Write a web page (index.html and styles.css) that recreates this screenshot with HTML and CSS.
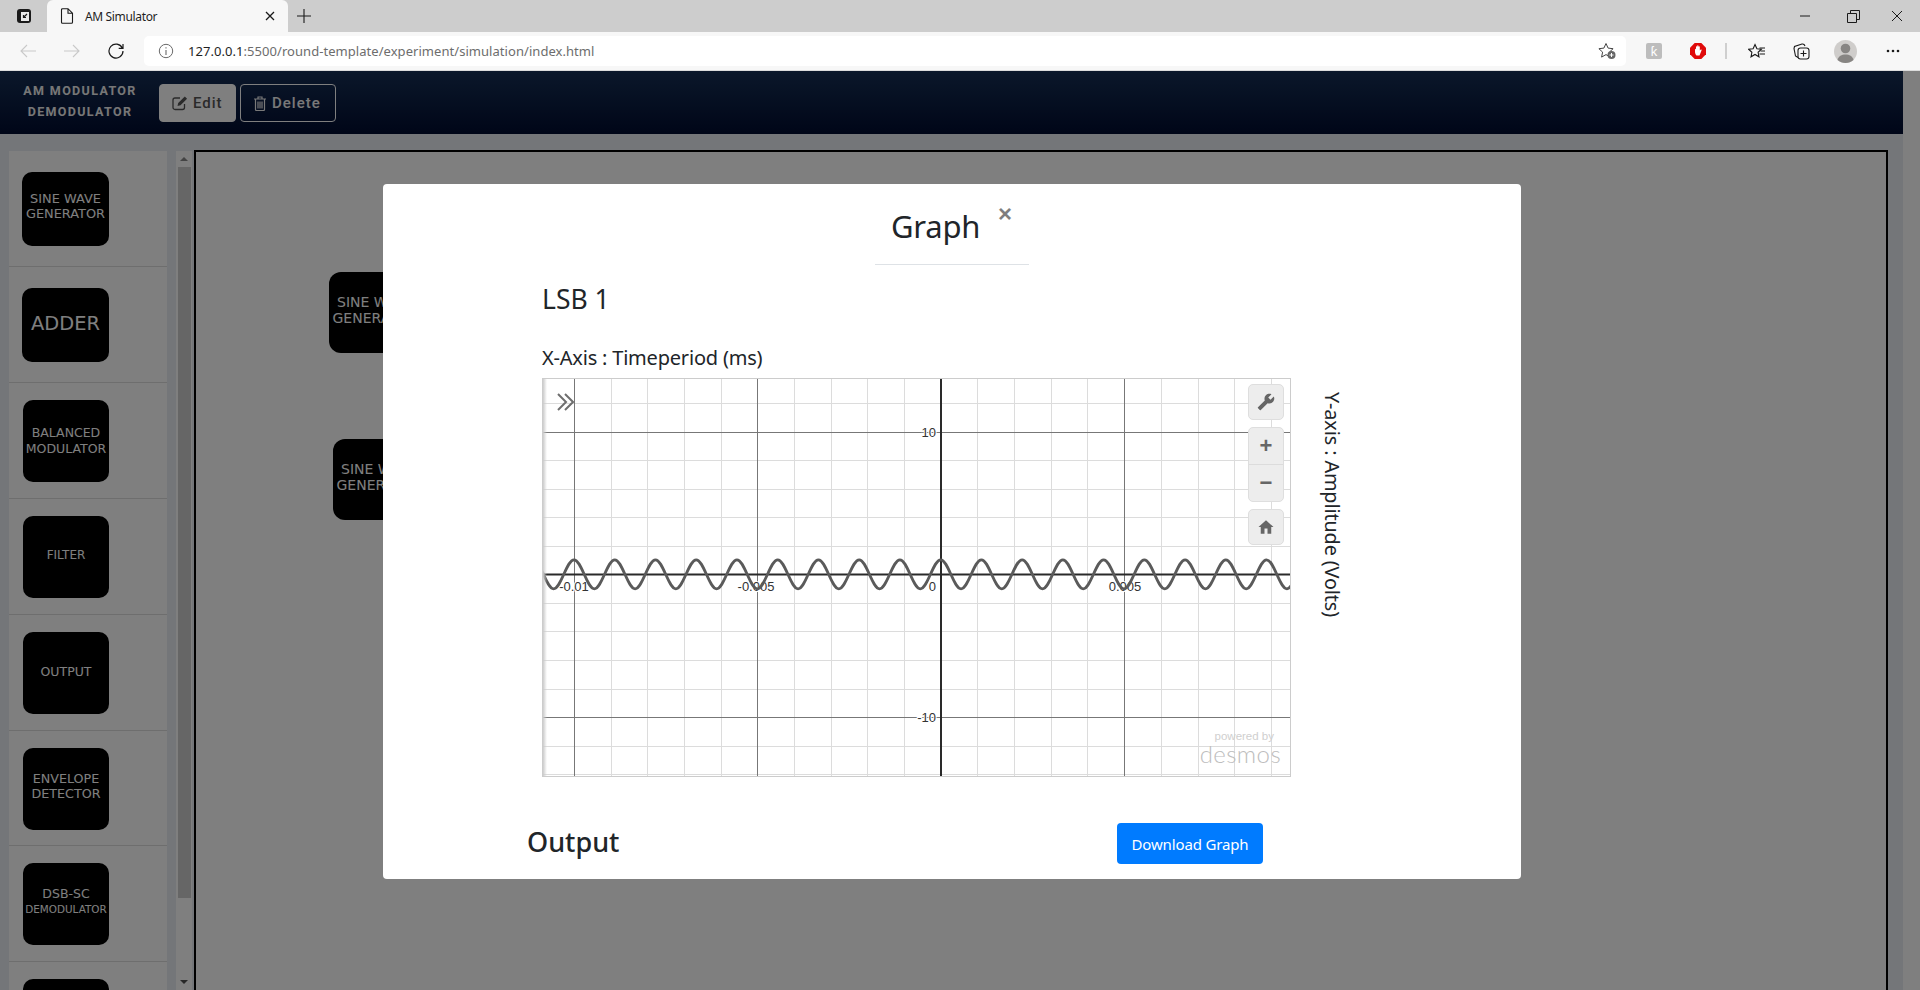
FILE: index.html
```html
<!DOCTYPE html>
<html lang="en">
<head>
<meta charset="utf-8">
<title>AM Simulator</title>
<link rel="stylesheet" href="styles.css">
</head>
<body>
<header class="browser">
  <div class="tabstrip">
    <svg class="tab-actions" viewBox="0 0 16 16" width="16" height="16"><rect x="1" y="1" width="14" height="14" rx="3" fill="#1a1a1a"/><rect x="5" y="4" width="8" height="9" fill="#e8e8e8"/><path d="M11 6L7.5 9.5M7.5 7v2.5H10" fill="none" stroke="#1a1a1a" stroke-width="1.2"/></svg>
    <div class="tab">
      <svg class="tab-doc" viewBox="0 0 14 16" width="14" height="16"><path d="M2.5.7h5.5l4.5 4.5v9a1 1 0 0 1-1 1h-9a1 1 0 0 1-1-1v-12.500a1 1 0 0 1 1-1zM8 .7v4.500h4.500" fill="none" stroke="#1a1a1a" stroke-width="1.1"/></svg>
      <span class="tab-title">AM Simulator</span>
      <svg class="tab-close" viewBox="0 0 10 10" width="10" height="10"><path d="M1 1l8 8M9 1l-8 8" stroke="#1a1a1a" stroke-width="1.3"/></svg>
    </div>
    <svg class="new-tab" viewBox="0 0 14 14" width="14" height="14"><path d="M7 0v14M0 7h14" stroke="#1a1a1a" stroke-width="1.1"/></svg>
    <div class="win-controls">
      <svg viewBox="0 0 10 10" width="10" height="10"><path d="M0 5h10" stroke="#1a1a1a"/></svg>
      <svg viewBox="0 0 13 13" width="13" height="13"><path d="M.5 3.500h9v9h-9zM3.500 3.500v-3h9v9h-3" fill="none" stroke="#1a1a1a"/></svg>
      <svg viewBox="0 0 10 10" width="10" height="10"><path d="M0 0l10 10M10 0L0 10" stroke="#1a1a1a"/></svg>
    </div>
  </div>
  <div class="toolbar">
    <svg class="nav-icon" viewBox="0 0 16 14" width="16" height="14"><path d="M16 7H1M7 1L1 7l6 6" fill="none" stroke="#c9c9c9" stroke-width="1.100"/></svg>
    <svg class="nav-icon" viewBox="0 0 16 14" width="16" height="14"><path d="M0 7h15M9 1l6 6-6 6" fill="none" stroke="#c9c9c9" stroke-width="1.100"/></svg>
    <svg class="nav-icon" viewBox="0 0 16 16" width="16" height="16"><path d="M14.300 5A7 7 0 1 0 15 8M15 1v4.300h-4.300" fill="none" stroke="#1a1a1a" stroke-width="1.200"/></svg>
    <div class="address">
      <svg class="info" viewBox="0 0 16 16" width="16" height="16"><circle cx="8" cy="8" r="6.700" fill="none" stroke="#6a6a6a"/><path d="M8 7v5M8 4.200v1.400" stroke="#6a6a6a" stroke-width="1.100"/></svg>
      <span class="url"><b class="url-host">127.0.0.1</b>:5500/round-template/experiment/simulation/index.html</span>
      <svg class="addr-star" viewBox="0 0 18 18" width="18" height="18"><path d="M8 1.500l2.100 4.600 5 .6-3.700 3.400 1 5L8 12.600l-4.400 2.500 1-5L.9 6.700l5-.6z" fill="none" stroke="#444"/><circle cx="13.500" cy="13" r="4" fill="#666"/><path d="M13.500 11v4M11.500 13h4" stroke="#fff"/></svg>
    </div>
    <div class="ext-icons">
      <span class="ext-k">ƙ</span>
      <svg viewBox="0 0 16 16" width="16" height="16"><path d="M4.700 0h6.600L16 4.700v6.600L11.300 16H4.700L0 11.300V4.700z" fill="#e00b0b"/><path d="M5 6.500c0-1 1-1 1 0V4c0-1 1.200-1 1.200 0V3c0-1 1.300-1 1.300 0v1c0-1 1.300-1 1.300 0v3.500l.7-.7c.7-.6 1.400 0 1 .7L9.500 12.500H6.500C5.500 11.500 5 10 5 9z" fill="#fff"/></svg>
      <i class="ext-sep"></i>
      <svg viewBox="0 0 18 16" width="18" height="16"><path d="M7 1.500l1.900 4.200 4.500.5-3.300 3.100.9 4.500L7 11.500l-4 2.300.9-4.500L.6 6.200l4.500-.5z" fill="none" stroke="#1a1a1a" stroke-width="1.100"/><path d="M11.500 5H17M12.500 8H17M11.500 11H17" stroke="#1a1a1a" stroke-width="1.100"/></svg>
      <svg viewBox="0 0 17 17" width="17" height="17"><path d="M5 14.500L2.500 13 1 5.500 1.500 3.500 9 1c1.500-.3 2.500.5 3 2" fill="none" stroke="#1a1a1a" stroke-width="1.100"/><rect x="5" y="5" width="11" height="11" rx="2.500" fill="#f7f7f7" stroke="#1a1a1a" stroke-width="1.100"/><path d="M10.500 7.500v6M7.500 10.500h6" stroke="#1a1a1a" stroke-width="1.100"/></svg>
      <svg class="avatar" viewBox="0 0 23 23" width="23" height="23"><circle cx="11.500" cy="11.500" r="11.500" fill="#cfcdcb"/><circle cx="11.500" cy="8.500" r="4.800" fill="#878583"/><path d="M3.500 20c1-4 4-5.500 8-5.500s7 1.500 8 5.500c-4.500 4-11.500 4-16 0z" fill="#878583"/></svg>
      <svg viewBox="0 0 14 4" width="14" height="4"><circle cx="2" cy="2" r="1.300" fill="#1a1a1a"/><circle cx="7" cy="2" r="1.300" fill="#1a1a1a"/><circle cx="12" cy="2" r="1.300" fill="#1a1a1a"/></svg>
    </div>
  </div>
</header>

<div class="viewport">
  <div class="page">
    <nav class="topnav">
      <div class="brand">AM MODULATOR<br>DEMODULATOR</div>
      <button class="btn-edit">
        <svg viewBox="0 0 16 16" width="16" height="16"><path d="M12.500 9v3.500a2 2 0 0 1-2 2H3a2 2 0 0 1-2-2V5a2 2 0 0 1 2-2h5" fill="none" stroke="currentColor" stroke-width="1.300"/><path d="M5.500 11l.7-3L12.800 1.400l2.300 2.300-6.600 6.600z" fill="currentColor"/></svg>
        Edit
      </button>
      <button class="btn-delete">
        <svg viewBox="0 0 14 16" width="14" height="16"><path d="M1 4h12M5 4V2h4v2M2.500 4v10.500a1 1 0 0 0 1 1h7a1 1 0 0 0 1-1V4M5 6.500v7M7 6.500v7M9 6.500v7" fill="none" stroke="currentColor" stroke-width="1.200"/></svg>
        Delete
      </button>
    </nav>
    <div class="workspace">
      <aside class="palette">
        <ul class="palette-list">
          <li class="item item-loose"><div class="block sine">SINE WAVE<br>GENERATOR</div></li>
          <li class="item item-loose"><div class="block adder">ADDER</div></li>
          <li class="item"><div class="block tall wide-lines">BALANCED<br>MODULATOR</div></li>
          <li class="item"><div class="block tall filter">FILTER</div></li>
          <li class="item"><div class="block tall out">OUTPUT</div></li>
          <li class="item item-short"><div class="block tall env">ENVELOPE<br>DETECTOR</div></li>
          <li class="item"><div class="block tall dsb"><span>DSB-SC<br><small>DEMODULATOR</small></span></div></li>
          <li class="item"><div class="block tall"></div></li>
        </ul>
        <div class="side-scroll">
          <span class="arrow-up"></span>
          <span class="side-thumb"></span>
          <span class="side-spacer"></span>
          <span class="arrow-down"></span>
        </div>
      </aside>
      <main class="canvas">
        <div class="node node-a">SINE WAVE<br>GENERATOR</div>
        <div class="node node-b">SINE WAVE<br>GENERATOR</div>
      </main>
    </div>
  </div>
  <div class="page-scroll"></div>

  <div class="overlay">
    <section class="modal">
      <div class="modal-header">
        <h2 class="modal-title">Graph</h2>
        <span class="close">×</span>
      </div>
      <div class="graph-section">
        <h3 class="graph-name">LSB 1</h3>
        <div class="x-label">X-Axis : Timeperiod (ms)</div>
        <div class="graph-row">
          <div class="graph">
            <svg class="plot" viewBox="0 0 747 397" width="747" height="397">
              <path class="grid-minor" d="M68.500 0V397M104.500 0V397M141.500 0V397M178.500 0V397M251.500 0V397M288.500 0V397M324.500 0V397M361.500 0V397M434.500 0V397M471.500 0V397M508.500 0V397M544.500 0V397M618.500 0V397M655.500 0V397M691.500 0V397M728.500 0V397M0 24.500H747M0 81.500H747M0 110.500H747M0 138.500H747M0 167.500H747M0 224.500H747M0 252.500H747M0 281.500H747M0 310.500H747M0 367.500H747M0 395.500H747"/>
              <path class="grid-major" d="M31.500 0V397M214.500 0V397M581.500 0V397M0 53.500H747M0 338.500H747"/>
              <path class="axis" d="M398 0V397M0 195.500H747"/>
              <text class="tick" x="393" y="58" text-anchor="end">10</text>
              <text class="tick" x="393" y="343" text-anchor="end">-10</text>
              <text class="tick" x="393" y="212" text-anchor="end">0</text>
              <text class="tick" x="31" y="212" text-anchor="middle">-0.01</text>
              <text class="tick" x="213" y="212" text-anchor="middle">-0.005</text>
              <text class="tick" x="582" y="212" text-anchor="middle">0.005</text>
              <path class="curve" d="M-9.740 180.800c7.420 0 12.950 29 20.370 29s12.950-29 20.370-29s12.950 29 20.370 29s12.950-29 20.370-29s12.950 29 20.370 29s12.950-29 20.370-29s12.950 29 20.370 29s12.950-29 20.370-29s12.950 29 20.370 29s12.950-29 20.370-29s12.950 29 20.370 29s12.950-29 20.370-29s12.950 29 20.370 29s12.950-29 20.370-29s12.950 29 20.370 29s12.950-29 20.370-29s12.950 29 20.370 29s12.950-29 20.370-29s12.950 29 20.370 29s12.950-29 20.370-29s12.950 29 20.370 29s12.950-29 20.370-29s12.950 29 20.370 29s12.950-29 20.370-29s12.950 29 20.370 29s12.950-29 20.370-29s12.950 29 20.370 29s12.950-29 20.370-29s12.950 29 20.370 29s12.950-29 20.370-29s12.950 29 20.370 29s12.950-29 20.370-29s12.950 29 20.370 29s12.950-29 20.370-29s12.950 29 20.370 29s12.950-29 20.370-29s12.950 29 20.370 29s12.950-29 20.370-29"/>
            </svg>
            <svg class="chevrons" viewBox="0 0 17 18" width="17" height="18"><path d="M1 1l8 8-8 8M8 1l8 8-8 8" fill="none" stroke="#6e6e6e" stroke-width="2"/></svg>
            <div class="controls">
              <div class="ctl-group"><button class="ctl"><svg viewBox="0 0 24 24" width="18" height="18"><path transform="matrix(-1 0 0 1 24 0)" d="M22.700 19l-9.100-9.100c.9-2.300.4-5-1.500-6.900-2-2-5-2.400-7.400-1.300L9 6 6 9 1.600 4.700C.4 7.100.9 10.100 2.900 12.100c1.900 1.900 4.600 2.400 6.900 1.500l9.100 9.100c.4.4 1 .4 1.400 0l2.300-2.300c.5-.4.5-1.100.1-1.400z" fill="#666"/></svg></button></div>
              <div class="ctl-group"><button class="ctl ctl-sym">+</button><button class="ctl ctl-sym ctl-lower">−</button></div>
              <div class="ctl-group"><button class="ctl"><svg viewBox="0 0 24 24" width="18" height="18"><path d="M10 21v-7h4v7h5v-9h3L12 3 2 12h3v9z" fill="#666"/></svg></button></div>
            </div>
            <div class="powered">
              <span class="powered-by">powered by</span>
              <span class="desmos">desmos</span>
            </div>
          </div>
          <div class="y-label">Y-axis : Amplitude (Volts)</div>
        </div>
      </div>
      <div class="output-row">
        <h3 class="output-title">Output</h3>
        <button class="btn-download">Download Graph</button>
      </div>
    </section>
  </div>
</div>
</body>
</html>
```

FILE: styles.css
```css
* { box-sizing: border-box; }
html, body { margin: 0; height: 990px; overflow: hidden; }
body { font-family: "Noto Sans", "Open Sans", sans-serif; color: #212529; background: #fff; }
h2, h3, ul { margin: 0; padding: 0; }
button { font-family: inherit; cursor: pointer; }

/* browser chrome */
.browser { height: 71px; }
.tabstrip { height: 32px; background: #cdcdcd; display: flex; align-items: center; padding-left: 16px; position: relative; }
.tab-actions { margin-right: 15px; }
.tab { width: 241px; height: 32px; background: #f7f7f7; border-radius: 6px 6px 0 0; display: flex; align-items: center; padding: 0 13px; }
.tab-doc { margin-right: 11px; margin-left: 0; }
.tab-title { font-size: 12px; letter-spacing: -.35px; color: #1f1f1f; flex: 1; white-space: nowrap; }
.new-tab { margin-left: 9px; }
.win-controls { margin-left: auto; display: flex; align-items: center; gap: 37px; padding-right: 18px; }
.win-controls svg:last-child { margin-left: -5px; }
.toolbar { height: 39px; background: #f7f7f7; border-bottom: 1px solid #dcdcdc; display: flex; align-items: center; padding-left: 20px; }
.nav-icon { margin-right: 28px; }
.nav-icon + .nav-icon + .nav-icon { margin-right: 20px; }
.address { width: 1482px; height: 30px; background: #fff; border-radius: 5px; display: flex; align-items: center; padding-left: 14px; margin-top: -1px; }
.info { margin-right: 14px; }
.url { font-size: 13px; letter-spacing: .05px; color: #6d6d6d; white-space: nowrap; flex: 1; }
.url-host { font-weight: 400; color: #1f1f1f; }
.addr-star { margin-right: 10px; }
.ext-icons { display: flex; align-items: center; flex: 1; padding-left: 20px; }
.ext-icons svg:nth-of-type(1) { margin-left: 28px; }
.ext-icons svg:nth-of-type(2) { margin-left: 21px; }
.ext-icons svg:nth-of-type(3) { margin-left: 27px; }
.ext-icons svg:nth-of-type(4) { margin-left: 24px; }
.ext-icons svg:nth-of-type(5) { margin-left: 29px; }
.ext-k { width: 16px; height: 16px; background: #bdbdbd; border-radius: 2px; color: #fff; font-size: 13px; line-height: 16px; text-align: center; }
.ext-sep { width: 2px; height: 16px; background: #cfcfcf; margin-left: 19px; }

/* page */
.viewport { height: 919px; position: relative; display: flex; overflow: hidden; }
.page { flex: 1; min-width: 0; background: #e8ecf2; }
.page-scroll { width: 17px; background: #fff; }
.topnav { height: 63px; background: linear-gradient(#162f55, #000c30); display: flex; align-items: center; padding: 0 0 0 23px; }
.brand { width: 114px; margin: -4px 22px 0 0; text-align: center; color: #efefef; font-family: Roboto, sans-serif; font-weight: 700; font-size: 12.500px; letter-spacing: 1.350px; line-height: 21px; white-space: nowrap; }
.btn-edit, .btn-delete { height: 38px; border-radius: 4px; font-family: Roboto, sans-serif; font-weight: 500; font-size: 15px; letter-spacing: 1px; display: flex; align-items: center; gap: 5px; padding: 0 12px; }
.btn-edit { width: 77px; background: #fff; border: 1px solid #fff; color: #555; margin-right: 4px; }
.btn-delete { width: 96px; background: transparent; border: 1px solid #fff; color: #f2f2f2; }
.workspace { display: flex; padding: 16px 15px 0 9px; }
.palette { display: flex; width: 184px; height: 839px; margin-top: 1px; flex: none; }
.palette-list { width: 158px; list-style: none; background: #fff; overflow: hidden; height: 839px; }
.item { height: 116px; border-bottom: 1px solid #ddd; padding: 17px 0 0 14px; }
.item-loose { padding-top: 21px; padding-left: 13px; }
.item-short { height: 115px; }
.block { width: 87px; height: 74px; background: #000; border-radius: 10px; color: #fff; display: flex; align-items: center; justify-content: center; text-align: center; font-family: "DejaVu Sans", sans-serif; font-size: 12.500px; line-height: 1.150; padding-bottom: 5px; white-space: nowrap; }
.tall { height: 82px; width: 86px; }
.sine { font-size: 12.900px; line-height: 14.300px; }
.adder { font-size: 19.400px; padding-bottom: 2px; }
.wide-lines { line-height: 16.300px; padding: 0; }
.filter { font-size: 12px; padding-bottom: 3px; }
.out { padding-bottom: 2px; }
.env { line-height: 14.500px; font-size: 12.700px; }
.dsb { line-height: 15px; }
.dsb small { font-size: 10.400px; }
.side-scroll { margin-left: 9px; width: 16px; background: #fff; display: flex; flex-direction: column; align-items: center; }
.arrow-up, .arrow-down { height: 16px; width: 16px; flex: none; position: relative; }
.arrow-up::after, .arrow-down::after { content: ""; position: absolute; left: 4px; width: 0; height: 0; border-left: 4px solid transparent; border-right: 4px solid transparent; }
.arrow-up::after { top: 6px; border-bottom: 4px solid #888; }
.arrow-down::after { top: 6px; border-top: 4px solid #505050; }
.side-thumb { width: 13px; height: 731px; background: #cdcdcd; flex: none; }
.side-spacer { flex: 1; }
.canvas { flex: 1; height: 900px; margin-left: 1px; border: 2px solid #000; background: #fff; position: relative; }
.node { position: absolute; width: 93px; height: 81px; background: #000; color: #fff; border-radius: 12px; font-family: "DejaVu Sans", sans-serif; font-size: 14px; line-height: 16px; display: flex; align-items: center; justify-content: center; text-align: center; padding-bottom: 5px; white-space: nowrap; }
.node-a { left: 133px; top: 120px; }
.node-b { left: 137px; top: 287px; }

/* dimming overlay and modal */
.overlay { position: absolute; inset: 0; background: rgba(0, 0, 0, .5); display: flex; justify-content: center; align-items: flex-start; padding: 113px 16px 0 0; }
.modal { width: 1138px; height: 695px; background: #fff; border-radius: 4px; display: flex; flex-direction: column; overflow: hidden; }
.modal-header { width: 154px; height: 81px; align-self: center; border-bottom: 1px solid #dee2e6; padding: 16px; display: flex; justify-content: space-between; flex: none; }
.modal-title { font-size: 31px; line-height: 48px; font-weight: 400; letter-spacing: -.25px; margin-top: 2px; }
.close { font-family: "Liberation Sans", sans-serif; font-size: 24px; line-height: 1; font-weight: 700; color: #000; opacity: .5; margin: 2px 1px 0 0; }
.graph-section { padding-left: 159px; flex: none; }
.graph-name { font-size: 26.500px; font-weight: 400; line-height: 34px; margin-top: 17px; }
.x-label { font-size: 20px; line-height: 30px; margin-top: 27px; letter-spacing: -.2px; margin-bottom: 5px; }
.graph-row { display: flex; align-items: flex-start; }
.graph { width: 749px; height: 399px; border: 1px solid #ccc; position: relative; overflow: hidden; flex: none; }
.graph::before { content: ""; position: absolute; left: 0; top: 0; bottom: 0; width: 4px; background: linear-gradient(90deg, #ccc, #fff0); z-index: 1; }
.plot { display: block; }
.grid-minor { stroke: #dcdcdc; stroke-width: 1; fill: none; }
.grid-major { stroke: #777; stroke-width: 1; fill: none; }
.axis { stroke: #2a2a2a; stroke-width: 2; fill: none; }
.tick { font-family: "Liberation Sans", Arial, sans-serif; font-size: 13px; fill: #333; stroke: #fff; stroke-width: 2px; paint-order: stroke; }
.curve { fill: none; stroke: #5a5a5a; stroke-width: 2.800px; }
.chevrons { position: absolute; left: 14px; top: 14px; }
.controls { position: absolute; top: 5px; left: 705px; display: flex; flex-direction: column; gap: 7px; }
.ctl-group { width: 36px; border: 1px solid #dedede; border-radius: 5px; background: #ededed; overflow: hidden; }
.ctl { display: flex; width: 100%; height: 34px; padding: 0; align-items: center; justify-content: center; border: 0; background: transparent; }
.ctl-sym { font-family: "Liberation Sans", sans-serif; font-size: 22px; font-weight: 700; color: #666; height: 36px; }
.ctl-lower { height: 37px; border-top: 1px solid #dcdcdc; }
.powered { position: absolute; right: 9px; bottom: 10px; display: flex; flex-direction: column; align-items: flex-end; color: #cfcfcf; }
.powered-by { font-family: "Liberation Sans", sans-serif; font-size: 11.500px; line-height: 12px; margin-right: 7px; }
.desmos { font-family: Lato, sans-serif; font-weight: 300; font-size: 24px; line-height: 24px; letter-spacing: .4px; color: #bdbdbd; }
.y-label { writing-mode: vertical-rl; font-size: 19.800px; line-height: 30px; margin: 14px 0 0 26px; letter-spacing: -.1px; white-space: nowrap; }
.output-row { display: flex; justify-content: space-between; align-items: center; padding: 0 258px 0 144px; margin-top: 45px; }
.output-title { font-size: 27px; font-weight: 500; line-height: 40px; margin-bottom: 3px; }
.btn-download { width: 146px; height: 41px; background: #007bff; color: #fff; border: 0; border-radius: 4px; font-size: 15px; padding: 0; letter-spacing: -.15px; }
```
